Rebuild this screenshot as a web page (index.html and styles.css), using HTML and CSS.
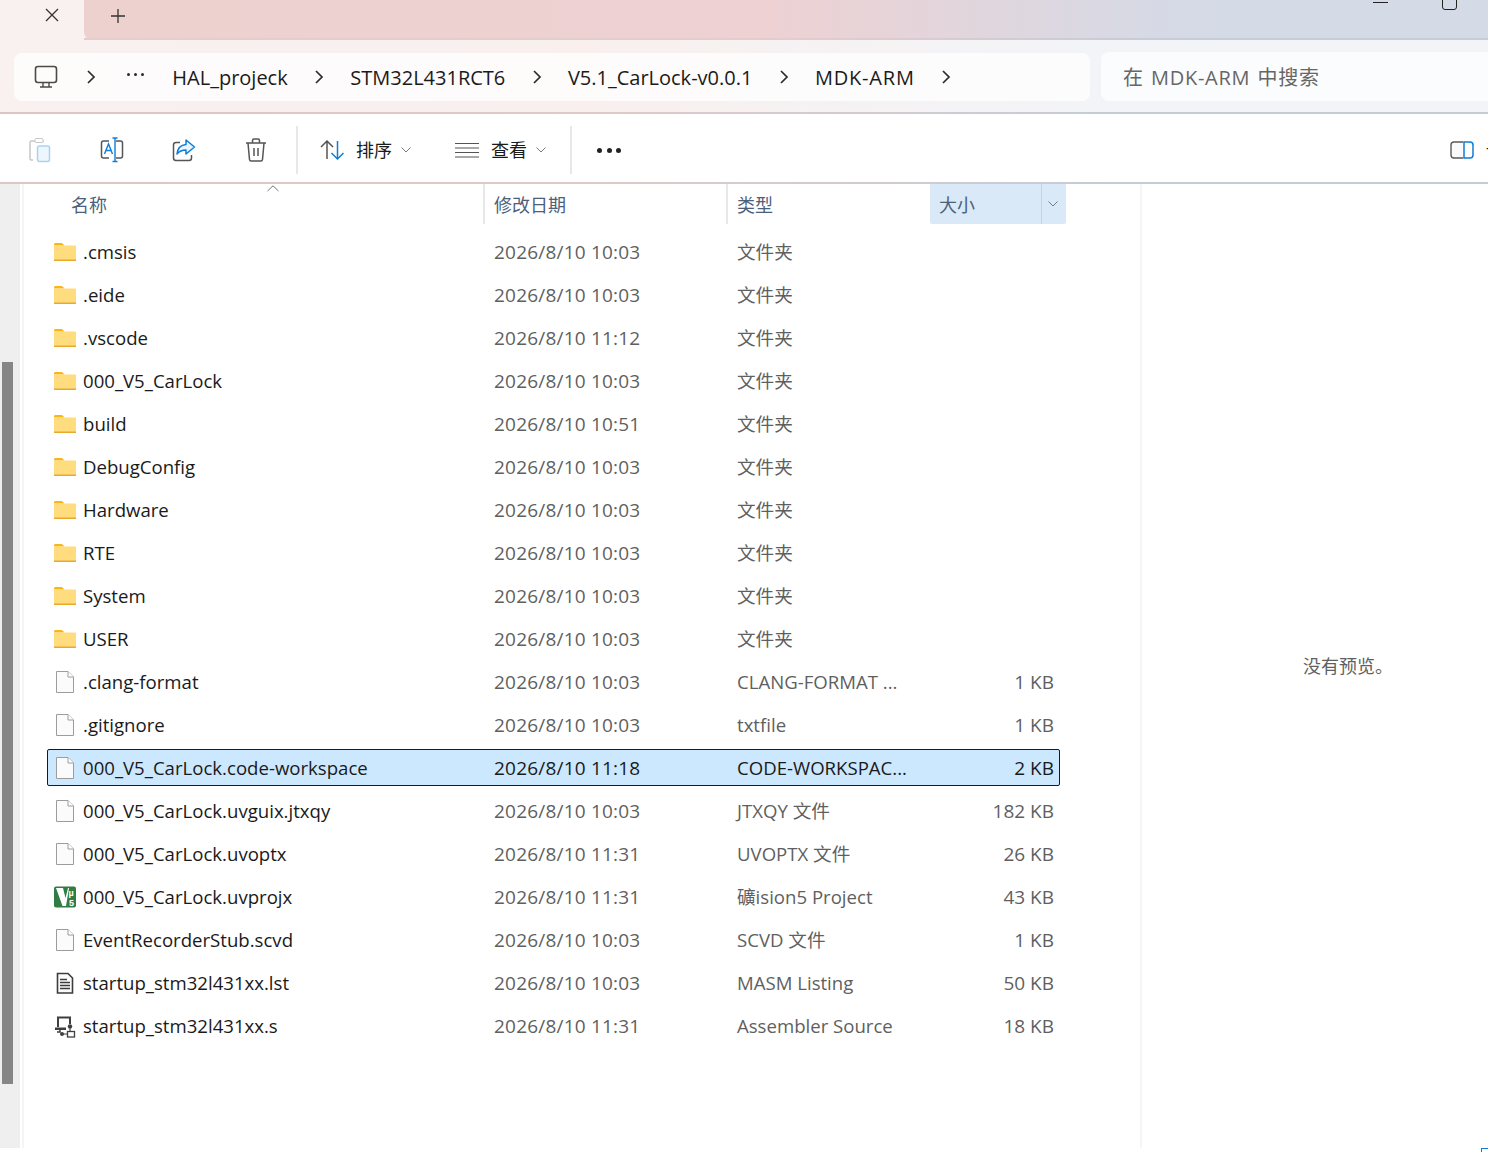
FILE: index.html
```html
<!DOCTYPE html>
<html lang="zh-CN">
<head>
    <meta charset="UTF-8"/>
    <title>MDK-ARM - 文件资源管理器</title>
    <link rel="stylesheet" href="styles.css">
</head>
<body>
<svg class="sprite" width="0" height="0">
    <symbol id="i-folder" viewBox="0 0 24 20">
        <path d="M1 2.5C1 1.7 1.6 1 2.4 1h6c.5 0 .9.2 1.2.5L11.5 3.5H1z" fill="#fbb616"/>
        <path d="M1 3.5h21.4c.4 0 .6.3.6.6v14.3c0 .4-.3.6-.6.6H1.6c-.4 0-.6-.3-.6-.6z" fill="#ffdc7d"/>
        <path d="M1 17.4h22v1c0 .4-.3.6-.6.6H1.6c-.4 0-.6-.3-.6-.6z" fill="#e8a92e"/>
    </symbol>
    <symbol id="i-file" viewBox="0 0 24 24">
        <path d="M3.5 1.5h11.5l5.5 5.5v15.5h-17z" fill="#fbfbfb" stroke="#9c9c9c"/>
        <path d="M15 1.5v5.5h5.5" fill="#fff" stroke="#9c9c9c"/>
    </symbol>
    <symbol id="i-lst" viewBox="0 0 24 24">
        <path d="M4.5 2.5h10.500l4.500 4.500v15h-15z" fill="#fafafa" stroke="#3c3c3c" stroke-width="1.600"/>
        <path d="M7 8.500h7M7 11.500h10M7 14.500h10M7 17.500h10" stroke="#3c3c3c" stroke-width="1.400"/>
    </symbol>
    <symbol id="i-asm" viewBox="0 0 24 24">
        <path d="M5 13V3.500h12V10" fill="none" stroke="#3f3f3f" stroke-width="2"/>
        <path d="M2 13.500h11v2.500H2z" fill="#3f3f3f"/>
        <path d="M7 16v2H4" fill="none" stroke="#3f3f3f" stroke-width="1.500"/>
        <circle cx="17" cy="12.500" r="2.200" fill="#3f3f3f"/>
        <path d="M17 14.500v4M9 20h6" stroke="#3f3f3f" stroke-width="1.200"/>
        <circle cx="9" cy="20" r="2" fill="#3f3f3f"/>
        <rect x="14.500" y="17.500" width="7" height="5.500" fill="#fff" stroke="#3f3f3f" stroke-width="1.300"/>
    </symbol>
    <symbol id="i-chev" viewBox="0 0 10 16">
        <path d="M2 2l6 6-6 6" fill="none" stroke="#2b2b2b" stroke-width="1.700"/>
    </symbol>
    <symbol id="i-down" viewBox="0 0 10 6">
        <path d="M.5.5L5 5 9.500.5" fill="none" stroke="#7a7a7a"/>
    </symbol>
</svg>

<div class="titlebar">
    <div class="tab">
        <svg class="tab-close" width="16" height="16" viewBox="0 0 16 16"><path d="M2 2l12 12M14 2L2 14" stroke="#333" stroke-width="1.300"/></svg>
    </div>
    <div class="tabstrip">
        <svg class="tab-add" width="16" height="16" viewBox="0 0 16 16"><path d="M8 1v14M1 8h14" stroke="#333" stroke-width="1.300"/></svg>
        <div class="win-buttons">
            <span class="win-min"></span>
            <span class="win-max"></span>
        </div>
    </div>
</div>

<div class="addressbar">
    <div class="breadcrumb">
        <svg class="pc-icon" width="24" height="24" viewBox="0 0 24 24"><rect x="1.500" y="1.500" width="21" height="16" rx="2.500" fill="none" stroke="#4a4a4a" stroke-width="1.600"/><path d="M9 18v3.500M15 18v3.500M6 22h12" stroke="#4a4a4a" stroke-width="1.400"/></svg>
        <svg class="chev" width="10" height="16"><use href="#i-chev"/></svg>
        <div class="crumb-dots"><i></i><i></i><i></i></div>
        <span class="crumb">HAL_projeck</span>
        <svg class="chev" width="10" height="16"><use href="#i-chev"/></svg>
        <span class="crumb">STM32L431RCT6</span>
        <svg class="chev" width="10" height="16"><use href="#i-chev"/></svg>
        <span class="crumb">V5.1_CarLock-v0.0.1</span>
        <svg class="chev" width="10" height="16"><use href="#i-chev"/></svg>
        <span class="crumb crumb-last">MDK-ARM</span>
        <svg class="chev" width="10" height="16"><use href="#i-chev"/></svg>
    </div>
    <div class="search">在 MDK-ARM 中搜索</div>
</div>

<div class="toolbar">
    <div class="tool-icons">
        <svg width="24" height="26" viewBox="0 0 24 26"><path d="M5 23H3.500C2.500 23 2 22.500 2 21.500V5.500C2 4.500 2.500 4 3.500 4H16" fill="none" stroke="#c8c8c8" stroke-width="1.500"/><rect x="7" y="1.500" width="8" height="4" rx="1" fill="#fff" stroke="#c8c8c8"/><rect x="9.500" y="9" width="12" height="15.500" rx="2" fill="#eef6fd" stroke="#a9d3f3" stroke-width="1.500"/></svg>
        <svg width="24" height="26" viewBox="0 0 24 26"><path d="M9 4H3.500C2.500 4 1.500 5 1.500 6v13c0 1 1 2 2 2H9M16 4h4.500c1 0 2 1 2 2v13c0 1-1 2-2 2H16" fill="none" stroke="#555" stroke-width="1.500"/><path d="M4.500 17L8.500 7l4 10M6 13.500h5" fill="none" stroke="#0f7dd8" stroke-width="1.400"/><path d="M12.500 1h5M15 1v23M12.500 24.500h5" fill="none" stroke="#0f7dd8" stroke-width="1.400"/></svg>
        <svg width="24" height="26" viewBox="0 0 24 26"><path d="M8 5.500H4C2.500 5.500 1.500 6.500 1.500 8v13c0 1.500 1 2.500 2.500 2.500h13c1.500 0 2.500-1 2.500-2.500v-3" fill="none" stroke="#555" stroke-width="1.500"/><path d="M14 3l8.500 7-8.500 7v-4c-4 0-6.500 1-9 4 .5-5 3.500-9 9-9.500z" fill="#e9f4fc" stroke="#0f7dd8" stroke-width="1.500" stroke-linejoin="round"/></svg>
        <svg width="24" height="26" viewBox="0 0 24 26"><path d="M2 6h20M8.500 5.500V3.500c0-1 .7-1.500 1.500-1.500h4c.8 0 1.500.5 1.500 1.500v2M4 6l1.500 16.500c.1 1 .8 1.500 1.700 1.500h9.600c.9 0 1.600-.5 1.700-1.500L20 6M10 11v8M14 11v8" fill="none" stroke="#555" stroke-width="1.500"/></svg>
    </div>
    <span class="tool-sep"></span>
    <div class="tool-btn">
        <svg width="24" height="20" viewBox="0 0 24 20"><path d="M1 7l6-6 6 6M7 1v18" fill="none" stroke="#555" stroke-width="1.500"/><path d="M11.500 13l6 6 6-6M17.500 19V1" fill="none" stroke="#0f7dd8" stroke-width="1.500"/></svg>
        <span>排序</span>
        <svg class="caret" width="10" height="6"><use href="#i-down"/></svg>
    </div>
    <div class="tool-btn">
        <svg width="24" height="16" viewBox="0 0 24 16"><path d="M0 1.500h24M0 6h24M0 10.500h24M0 15h24" stroke="#555" stroke-width="1.200"/></svg>
        <span>查看</span>
        <svg class="caret" width="10" height="6"><use href="#i-down"/></svg>
    </div>
    <span class="tool-sep sep-more"></span>
    <div class="more-dots"><i></i><i></i><i></i></div>
    <div class="tool-details">
        <svg width="24" height="18" viewBox="0 0 24 18"><path d="M13 1H4C2 1 1 2 1 4v10c0 2 1 3 3 3h9" fill="#fafafa" stroke="#5a5a5a" stroke-width="1.400"/><path d="M14 1h6c2 0 3 1 3 3v10c0 2-1 3-3 3h-6z" fill="#fff" stroke="#0f7dd8" stroke-width="1.500"/></svg>
        <span>详细信息</span>
    </div>
</div>

<div class="main">
    <div class="side-scroll"><div class="thumb"></div></div>
    <div class="files">
        <div class="col-head">
            <div class="head-cell head-name">名称<svg class="sort-up" width="12" height="7" viewBox="0 0 12 7"><path d="M.5 6L6 .8 11.500 6" fill="none" stroke="#777"/></svg></div>
            <div class="head-cell head-date">修改日期</div>
            <div class="head-cell head-type">类型</div>
            <div class="head-cell head-size"><span class="size-label">大小</span><span class="size-drop"><svg width="10" height="6"><use href="#i-down"/></svg></span></div>
        </div>
        <div class="rows">
            <div class="row"><span class="name"><svg class="ico ico-folder"><use href="#i-folder"/></svg>.cmsis</span><span class="date">2026/8/10 10:03</span><span class="type type-cjk">文件夹</span><span class="size"></span></div>
            <div class="row"><span class="name"><svg class="ico ico-folder"><use href="#i-folder"/></svg>.eide</span><span class="date">2026/8/10 10:03</span><span class="type type-cjk">文件夹</span><span class="size"></span></div>
            <div class="row"><span class="name"><svg class="ico ico-folder"><use href="#i-folder"/></svg>.vscode</span><span class="date">2026/8/10 11:12</span><span class="type type-cjk">文件夹</span><span class="size"></span></div>
            <div class="row"><span class="name"><svg class="ico ico-folder"><use href="#i-folder"/></svg>000_V5_CarLock</span><span class="date">2026/8/10 10:03</span><span class="type type-cjk">文件夹</span><span class="size"></span></div>
            <div class="row"><span class="name"><svg class="ico ico-folder"><use href="#i-folder"/></svg>build</span><span class="date">2026/8/10 10:51</span><span class="type type-cjk">文件夹</span><span class="size"></span></div>
            <div class="row"><span class="name"><svg class="ico ico-folder"><use href="#i-folder"/></svg>DebugConfig</span><span class="date">2026/8/10 10:03</span><span class="type type-cjk">文件夹</span><span class="size"></span></div>
            <div class="row"><span class="name"><svg class="ico ico-folder"><use href="#i-folder"/></svg>Hardware</span><span class="date">2026/8/10 10:03</span><span class="type type-cjk">文件夹</span><span class="size"></span></div>
            <div class="row"><span class="name"><svg class="ico ico-folder"><use href="#i-folder"/></svg>RTE</span><span class="date">2026/8/10 10:03</span><span class="type type-cjk">文件夹</span><span class="size"></span></div>
            <div class="row"><span class="name"><svg class="ico ico-folder"><use href="#i-folder"/></svg>System</span><span class="date">2026/8/10 10:03</span><span class="type type-cjk">文件夹</span><span class="size"></span></div>
            <div class="row"><span class="name"><svg class="ico ico-folder"><use href="#i-folder"/></svg>USER</span><span class="date">2026/8/10 10:03</span><span class="type type-cjk">文件夹</span><span class="size"></span></div>
            <div class="row"><span class="name"><svg class="ico"><use href="#i-file"/></svg>.clang-format</span><span class="date">2026/8/10 10:03</span><span class="type">CLANG-FORMAT ...</span><span class="size">1 KB</span></div>
            <div class="row"><span class="name"><svg class="ico"><use href="#i-file"/></svg>.gitignore</span><span class="date">2026/8/10 10:03</span><span class="type">txtfile</span><span class="size">1 KB</span></div>
            <div class="row selected"><span class="name"><svg class="ico"><use href="#i-file"/></svg>000_V5_CarLock.code-workspace</span><span class="date">2026/8/10 11:18</span><span class="type">CODE-WORKSPAC...</span><span class="size">2 KB</span></div>
            <div class="row"><span class="name"><svg class="ico"><use href="#i-file"/></svg>000_V5_CarLock.uvguix.jtxqy</span><span class="date">2026/8/10 10:03</span><span class="type type-cjk">JTXQY 文件</span><span class="size">182 KB</span></div>
            <div class="row"><span class="name"><svg class="ico"><use href="#i-file"/></svg>000_V5_CarLock.uvoptx</span><span class="date">2026/8/10 11:31</span><span class="type type-cjk">UVOPTX 文件</span><span class="size">26 KB</span></div>
            <div class="row"><span class="name"><svg class="ico" viewBox="0 0 24 24"><rect x="1" y="1.500" width="22" height="21" rx="2" fill="#2f7d42"/><path d="M3 3h7l2.500 10L15 3h1l-3 18H9.500z" fill="#fff"/><text x="15.500" y="10.500" class="uv-text">µ</text><text x="16" y="20.500" class="uv-text">5</text></svg>000_V5_CarLock.uvprojx</span><span class="date">2026/8/10 11:31</span><span class="type type-cjk">礦ision5 Project</span><span class="size">43 KB</span></div>
            <div class="row"><span class="name"><svg class="ico"><use href="#i-file"/></svg>EventRecorderStub.scvd</span><span class="date">2026/8/10 10:03</span><span class="type type-cjk">SCVD 文件</span><span class="size">1 KB</span></div>
            <div class="row"><span class="name"><svg class="ico"><use href="#i-lst"/></svg>startup_stm32l431xx.lst</span><span class="date">2026/8/10 10:03</span><span class="type">MASM Listing</span><span class="size">50 KB</span></div>
            <div class="row"><span class="name"><svg class="ico"><use href="#i-asm"/></svg>startup_stm32l431xx.s</span><span class="date">2026/8/10 11:31</span><span class="type">Assembler Source</span><span class="size">18 KB</span></div>
        </div>
    </div>
    <div class="preview">没有预览。</div>
</div>
<div class="corner-mark"></div>
</body>
</html>
```

FILE: styles.css
```css
* {
    margin: 0;
    padding: 0;
    box-sizing: border-box
}

html, body {
    width: 1488px;
    height: 1152px;
    overflow: hidden
}

body {
    position: relative;
    background: #fff;
    font-family: "Open Sans", "Noto Sans CJK SC", sans-serif;
    font-size: 19px;
    color: #1a1a1a
}

.sprite {
    position: absolute
}

.uv-text {
    font-family: "Liberation Sans", sans-serif;
    font-size: 9px;
    font-weight: bold;
    fill: #fff
}

/* title bar */
.titlebar {
    display: flex;
    height: 40px;
    background: #f8f1ef
}

.tab {
    width: 84px;
    padding: 7px 0 0 44px
}

.tab-close {
    display: block
}

.tabstrip {
    flex: 1;
    display: flex;
    align-items: flex-start;
    justify-content: space-between;
    padding: 8px 0 0 26px;
    border-radius: 0 0 0 8px;
    border-bottom: 2px solid;
    border-image: linear-gradient(to right, #e4cdcc 0%, #e3cccd 50%, #c6ccd8 75%, #c6ccd8 100%) 1;
    background: linear-gradient(to right, #edd1cf 0%, #eed1d3 48%, #d5dae6 78%, #d4dae6 100%)
}

.win-buttons {
    display: flex;
    align-items: flex-start;
    margin-top: -8px;
    padding-right: 31px
}

.win-min {
    width: 15px;
    height: 1px;
    margin-top: 2px;
    background: #222
}

.win-max {
    width: 15px;
    height: 11px;
    margin-left: 54px;
    margin-top: -1px;
    border: 1.500px solid #222;
    border-radius: 0 0 3px 3px
}

/* address bar */
.addressbar {
    display: flex;
    height: 74px;
    padding: 12px 0 0 14px;
    gap: 11px;
    border-bottom: 2px solid;
    border-image: linear-gradient(to right, #dcc5c5 0%, #e0c9c9 40%, #c5ccd6 75%, #c4ccd6 100%) 1;
    background: linear-gradient(to right, #f8f1ef 0%, #f9f0ee 40%, #f3f4f8 72%, #f3f4f8 100%)
}

.breadcrumb {
    display: flex;
    align-items: center;
    width: 1076px;
    height: 48px;
    margin-top: 1px;
    padding-left: 20px;
    background: rgba(255, 255, 255, .75);
    border-radius: 8px;
    font-size: 20px
}

.pc-icon {
    margin-right: 28px
}

.chev {
    flex: none
}

.crumb {
    margin: 0 26.300px;
    white-space: nowrap
}

.crumb-last {
    letter-spacing: .8px
}

.crumb-dots {
    display: flex;
    gap: 4px;
    margin: -5px 0 0 31px;
    padding-right: 2px
}

.crumb-dots i {
    width: 3px;
    height: 3px;
    border-radius: 50%;
    background: #2b2b2b
}

.search {
    flex: 1;
    height: 49px;
    padding: 10px 0 0 22px;
    color: #666;
    background: #fbfcfe;
    border-radius: 8px 0 0 8px;
    font-size: 20px;
    letter-spacing: .7px;
    word-spacing: 1.500px
}

/* toolbar */
.toolbar {
    display: flex;
    align-items: center;
    height: 70px;
    padding: 4px 0 0 28px;
    border-bottom: 2px solid;
    border-image: linear-gradient(to right, #dcc6c6 0%, #dfc9c9 40%, #c4ccd6 75%, #c4ccd6 100%) 1;
    white-space: nowrap
}

.tool-icons {
    display: flex;
    gap: 48px
}

.tool-sep {
    flex: none;
    width: 2px;
    height: 48px;
    margin: 0 22px 0 28px;
    background: #e8e8e8
}

.tool-btn {
    display: flex;
    align-items: center;
    margin-right: 44px;
    font-size: 18px
}

.tool-btn span {
    margin: -2px 9px 0 12px
}

.tool-btn + .tool-btn {
    margin-right: 0
}

.caret {
    flex: none
}

.sep-more {
    margin: 0 25px 0 24px
}

.more-dots {
    display: flex;
    gap: 4.500px
}

.more-dots i {
    width: 5px;
    height: 5px;
    border-radius: 50%;
    background: #222
}

.tool-details {
    display: flex;
    align-items: center;
    gap: 12px;
    margin-left: 829px;
    font-size: 18px
}

/* file list */
.main {
    display: flex;
    height: 964px
}

.side-scroll {
    flex: none;
    width: 20px;
    padding: 178px 0 0 2px;
    background: #efefef
}

.thumb {
    width: 11px;
    height: 722px;
    background: #868686
}

.files {
    flex: none;
    width: 1120px;
    margin-left: 2px;
    border-left: 2px solid #f5f5f5;
    border-right: 2px solid #f5f5f5
}

.col-head {
    display: flex;
    height: 40px;
    color: #4c607a;
    font-size: 18px
}

.head-cell {
    display: flex;
    align-items: center;
    padding: 0 0 1px 9px;
    border-right: 2px solid #e8e8e8
}

.head-name {
    position: relative;
    width: 461px;
    padding-left: 47px
}

.sort-up {
    position: absolute;
    top: 1px;
    left: 243px
}

.head-date {
    width: 243px
}

.head-type {
    width: 202px;
    border-right: none
}

.head-size {
    width: 136px;
    padding: 0;
    border-right: none;
    align-items: stretch;
    background: #d9e9f7;
    border-radius: 0 0 2px 2px
}

.size-label {
    display: flex;
    align-items: center;
    width: 111px;
    padding: 0 0 1px 9px
}

.size-drop {
    display: flex;
    align-items: center;
    justify-content: center;
    width: 25px;
    padding-right: 3px;
    border-left: 1px solid #bfd4e6
}

.rows {
    display: flex;
    flex-direction: column;
    gap: 6px;
    padding: 9px 0 0 23px
}

.row {
    display: grid;
    grid-template-columns: 441px 243px 193px 124px;
    align-items: center;
    width: 1013px;
    height: 37px;
    padding-left: 5px;
    border: 1px solid transparent;
    border-radius: 2px;
    color: #5f5f5f;
    white-space: nowrap
}

.row.selected {
    background: #cce8ff;
    border-color: #1a1a1a;
    color: #1a1a1a
}

.name {
    display: flex;
    align-items: center;
    gap: 6px;
    font-size: 18.600px;
    color: #1a1a1a
}

.date {
    letter-spacing: .2px
}

.type {
    font-size: 18.600px
}

.type-cjk {
    margin-bottom: 2px
}

.ico {
    flex: none;
    width: 24px;
    height: 24px
}

.ico-folder {
    height: 20px
}

.size {
    text-align: right
}

.preview {
    flex: 1;
    padding: 468px 0 0 161px;
    color: #5f5f5f;
    font-size: 18px
}

.corner-mark {
    position: absolute;
    right: 0;
    bottom: 0;
    width: 7px;
    height: 4px;
    border: solid #0f7dd8;
    border-width: 1px 0 0 1px
}
```
